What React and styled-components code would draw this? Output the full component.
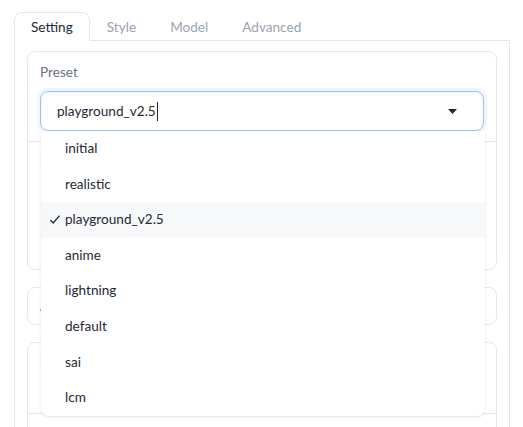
import React from "react";
import styled, { createGlobalStyle } from "styled-components";

const GlobalStyle = createGlobalStyle`
  html, body { margin: 0; padding: 0; background: #ffffff; }
  body {
    font-family: Lato, "Noto Sans", sans-serif;
    color: #1f2937;
    -webkit-font-smoothing: antialiased;
  }
  * { box-sizing: border-box; }
`;

const FONT = "13.6px";

const Page = styled.div`
  height: 427px;
  overflow: hidden;
  padding: 12px 13px 0 14px;
`;

const TabNav = styled.div`
  display: flex;
  border-bottom: 1px solid #e5e7eb;
`;

const TabButton = styled.button`
  font: inherit;
  font-size: ${FONT};
  height: 29px;
  padding: 0 16px;
  margin-bottom: -1px;
  background: ${(p) => (p.$active ? "#ffffff" : "transparent")};
  color: ${(p) => (p.$active ? "#1f2937" : "#9ca3af")};
  border: 1px solid ${(p) => (p.$active ? "#e5e7eb" : "transparent")};
  border-bottom: ${(p) => (p.$active ? "1px solid #ffffff" : "1px solid transparent")};
  border-radius: 8px 8px 0 0;
  cursor: pointer;
`;

const TabPanel = styled.div`
  border: 1px solid #e5e7eb;
  border-top: none;
  padding: 10px 12px;
  display: flex;
  flex-direction: column;
  gap: 17px;
`;

const Block = styled.div`
  border: 1px solid #e5e7eb;
  border-radius: 8px;
  background: #ffffff;
  position: relative;
  ${(p) => (p.$raised ? "z-index: 5;" : "")}
`;

const Section = styled.div`
  padding: ${(p) => p.$pad || "10px 12px"};
  border-top: ${(p) => (p.$divider ? "1px solid #e5e7eb" : "none")};
  min-height: ${(p) => p.$h || "auto"};
`;

const Label = styled.div`
  font-size: ${FONT};
  line-height: 20px;
  color: #6b7280;
  margin-bottom: ${(p) => p.$mb || "9px"};
`;

const InputWrap = styled.div`
  position: relative;
`;

const InputBox = styled.div`
  height: 40px;
  display: flex;
  align-items: center;
  padding: 0 16px;
  border: 1px solid #93c5fd;
  border-radius: 8px;
  background: #ffffff;
  box-shadow: 0 0 0 3px #eff6ff, inset 0 2px 4px rgba(0, 0, 0, 0.04);
  font-size: ${FONT};
  color: #1f2937;
`;

const InputText = styled.span`
  flex: 1;
  display: flex;
  align-items: center;
`;

const Caret = styled.span`
  display: inline-block;
  width: 0;
  height: 19px;
  border-left: 1px solid #1f2937;
  margin-left: 1px;
`;

const Arrow = styled.svg`
  width: 9px;
  height: 5px;
  margin-right: 10px;
  fill: #1f2937;
`;

const Options = styled.ul`
  position: absolute;
  top: 100%;
  left: 1px;
  right: -1px;
  margin: 0;
  padding: 0;
  list-style: none;
  background: #ffffff;
  border-radius: 0 0 8px 8px;
  box-shadow: 0 1px 3px 0 rgba(0, 0, 0, 0.1), 0 1px 2px -1px rgba(0, 0, 0, 0.1);
  z-index: 10;
`;

const Option = styled.li`
  display: flex;
  align-items: center;
  padding: 8px 8px;
  height: 35.6px;
  font-size: ${FONT};
  line-height: 19.6px;
  color: #1f2937;
  background: ${(p) => (p.$selected ? "#f7f8fa" : "transparent")};
`;

const CheckSlot = styled.span`
  width: 16px;
  display: inline-flex;
  align-items: center;
  visibility: ${(p) => (p.$show ? "visible" : "hidden")};
`;

const CheckIcon = styled.svg`
  width: 10px;
  height: 9px;
  stroke: #1f2937;
  fill: none;
  stroke-width: 1.3;
  margin-left: 1px;
`;

const tabs = ["Setting", "Style", "Model", "Advanced"];
const presets = [
  "initial",
  "realistic",
  "playground_v2.5",
  "anime",
  "lightning",
  "default",
  "sai",
  "lcm",
];
const selected = "playground_v2.5";

export default function App() {
  return (
    <>
      <GlobalStyle />
      <Page>
        <TabNav>
          {tabs.map((t, i) => (
            <TabButton key={t} $active={i === 0}>
              {t}
            </TabButton>
          ))}
        </TabNav>
        <TabPanel>
          <Block $raised>
            <Section>
              <Label>Preset</Label>
              <InputWrap>
                <InputBox>
                  <InputText>
                    {selected}
                    <Caret />
                  </InputText>
                  <Arrow viewBox="0 0 9 5">
                    <polygon points="0,0 9,0 4.5,5" />
                  </Arrow>
                </InputBox>
                <Options>
                  {presets.map((p) => (
                    <Option key={p} $selected={p === selected}>
                      <CheckSlot $show={p === selected}>
                        <CheckIcon viewBox="0 0 10 9">
                          <polyline points="0.5,5 3.2,8 9.5,0.7" />
                        </CheckIcon>
                      </CheckSlot>
                      {p}
                    </Option>
                  ))}
                </Options>
              </InputWrap>
            </Section>
            <Section $divider $h="128px">
              <Label>Performance</Label>
            </Section>
          </Block>
          <Block>
            <Section $pad="8px 12px">
              <Label $mb="0">Aspect Ratios</Label>
            </Section>
          </Block>
          <Block>
            <Section $h="70px">
              <Label>Image Number</Label>
            </Section>
            <Section $divider $h="60px" />
          </Block>
        </TabPanel>
      </Page>
    </>
  );
}
